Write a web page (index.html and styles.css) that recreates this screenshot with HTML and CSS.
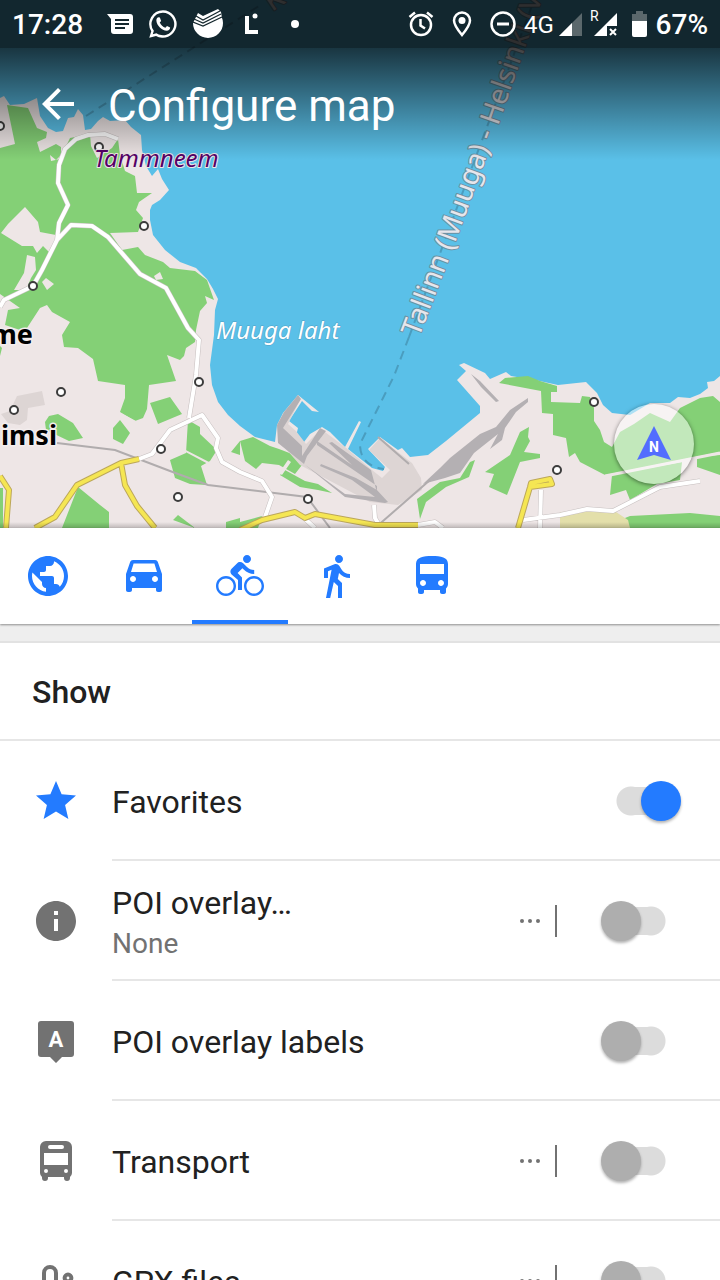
FILE: index.html
```html
<!DOCTYPE html>
<html lang="en">
<head>
<meta charset="utf-8">
<meta name="viewport" content="width=device-width, initial-scale=1">
<title>Configure map</title>
<link rel="stylesheet" href="styles.css">
</head>
<body>
<div class="app">
  <header class="hero">
    <svg class="map" viewBox="0 0 720 528" preserveAspectRatio="xMidYMid slice" role="img" aria-label="Map">
      <rect class="sea" width="720" height="528"/>
      <path class="land" d="M0 98L4 96 10 105 24 104 37 98 40 116 48 128 56 132 63 131 68 118 74 117 78 109 83 115 85 130 91 129 98 121 103 117 110 121 125 120 131 127 141 135 142 150 146 166 152 176 158 169 162 179 169 190 160 200 152 205 150 210 150 220 153 235 165 250 180 262 196 268 207 279 213 289 218 299 215 310 214 335 210 365 212 385 218 402 228 415 240 426 255 437 275 442 277 425 283 413 298 395 319 412 312 411 302 401 289 421 298 428 296 436 304 442 310 434 322 427 330 432 345 447 359 421 361 422 348 449 372 468 383 471 385 467 368 449 380 437 398 450 402 448 410 457 428 455 446 441 480 413 480 406 457 380 466 371 459 365 464 363 485 373 490 379 506 372 511 376 535 380 558 385 586 382 597 393 603 405 612 413 630 415 650 403 670 403 678 397 690 398 700 394 708 388 707 382 714 381 720 376V528H0Z"/>
      <g class="wood">
        <path d="M7 105L28 108 37 128 47 132 46 138 37 142 40 152 50 147 56 144 61 147 61 155 56 160 50 155 51 161 60 159 70 138 90 134 91 146 97 158 112 148 118 139 120 155 125 171 135 176 137 193 152 193 139 202 136 210 143 218 138 232 110 233 122 250 138 247 145 255 163 262 170 268 195 271 207 280 214 300 205 296 207 303 200 311 196 330 195 342 186 348 184 356 180 360 167 355 176 381 149 385 147 409 143 418 135 421 120 412 125 398 125 385 98 381 93 359 78 348 64 347 62 335 70 322 52 312 47 305 40 308 27 328 20 330 5 325 8 310 20 308 0 294V148L15 144Z"/>
        <path d="M45 422L49 416 58 414 73 423 83 438 69 441 46 430ZM150 403L170 397 182 414 158 424ZM113 428L120 420 130 433 123 444 113 439ZM188 420L200 427 200 434 217 450 210 461 201 466 207 485 190 484 175 478 170 460 186 453ZM62 528L78 487 100 505 109 512 109 528ZM173 520L178 515 195 528ZM226 528V522L240 518V528ZM0 346L2 348 0 356ZM0 488H3V528H0ZM231 452L240 441 240 455ZM240 441L253 437 270 446 279 449 292 454 302 465 295 474 279 465 262 463 256 469 245 461ZM285 470L305 481 318 484 332 493 318 490 300 487 280 475ZM240 522L262 516 258 528H240ZM417 499L440 482 460 478 470 462 475 460 469 477 446 487 426 502 420 519Z"/>
        <path d="M499 383L505 378 528 376 540 381 557 386 557 392 551 392 551 402 580 403 582 396 590 397 594 408 594 421 600 430 604 442 612 447 620 432 634 424 650 413 670 422 680 408 700 398 713 396 720 402V452L605 475 580 462 575 453 569 457 566 438 553 435 553 414 542 413 541 391ZM612 475L682 462 680 480 657 484 630 500 626 490 610 495ZM485 472L510 455 520 432 529 427 528 437 530 441 524 452 540 454 540 458 520 462 507 495 489 487 494 474ZM620 520L630 516 690 513 720 516 V528H628ZM697 457L720 455V475L697 467Z"/>
      </g>
      <g class="land">
        <path d="M1 233L8 224 25 207 38 222 40 232 56 235 57 241 50 253 43 246 37 253 33 246 22 246ZM27 255L35 257 36 270 31 278 26 290 14 290 24 273ZM46 278L54 284 47 290 42 282ZM154 276L160 272 163 279 156 280ZM119 412L136 421 135 423 119 415ZM178 446L211 463 210 465 178 448ZM288 460L291 462 282 475 279 473Z"/>
      </g>
      <path class="field" d="M560 512L613 510 628 520 630 528H560Z"/>
      <g class="yard">
        <path d="M17 396L42 391 45 405 28 408 27 420 20 425 8 423 1 414 10 411ZM289 408L300 400 288 424 296 431 306 444 321 429 345 447 372 470 382 478 390 470 369 450 380 438 412 463 421 478 422 490 398 505 370 502 300 465 278 440Z"/>
      </g>
      <g class="dock">
        <path d="M298 395L301 399 283 428 302 446 302 456 320 428 326 431 307 456 304 464 345 494 375 497 352 480 320 466 321 464 356 478 377 490 377 486 317 445 317 441 352 465 329 443 332 442 371 470 376 489 388 502 385 503 345 497 278 443 277 425 284 412ZM425 482L440 468 450 458 480 434 496 427 510 410 528 398 528 402 516 412 505 428 502 440 490 449 498 434 474 453 460 473 445 478 423 484ZM471 374L480 381 499 401 496 402 481 387Z"/>
        <path class="rail" d="M378 437L409 464M57 443L115 450 170 471 208 485 307 497 330 528M375 528L430 480"/>
      </g>
      <path class="road-edge" d="M118 139L105 134 88 135 76 139 65 149 59 165 58 183 68 205 59 223 57 240M0 307L4 300 33 286 42 270 57 240 71 225 92 226 108 237 140 274 166 288 188 328 199 340 196 375 189 418M139 459L152 454 170 430 202 415 218 438 216 448 222 462 240 472 262 481 272 497 264 520M374 505L375 518 381 528M304 518L315 528M418 525L435 522 443 528M523 520L560 515 587 509 613 511 660 487 700 481M541 490L540 528"/>
      <path class="road" d="M118 139L105 134 88 135 76 139 65 149 59 165 58 183 68 205 59 223 57 240M0 307L4 300 33 286 42 270 57 240 71 225 92 226 108 237 140 274 166 288 188 328 199 340 196 375 189 418M139 459L152 454 170 430 202 415 218 438 216 448 222 462 240 472 262 481 272 497 264 520M374 505L375 518 381 528M304 518L315 528M418 525L435 522 443 528M523 520L560 515 587 509 613 511 660 487 700 481M541 490L540 528"/>
      <path class="lane" d="M605 476L720 453"/>
      <path class="highway-edge" d="M139 459L121 463 77 485 55 517 35 528M121 463L125 485 137 506 155 528M0 476L9 490 6 528M240 530L262 520 295 512 305 518 315 514 375 525 418 525M518 528L530 487 531 483 550 479 552 484 530 487"/>
      <path class="highway" d="M139 459L121 463 77 485 55 517 35 528M121 463L125 485 137 506 155 528M0 476L9 490 6 528M240 530L262 520 295 512 305 518 315 514 375 525 418 525M518 528L530 487 531 483 550 479 552 484 530 487"/>
      <path class="ferry" d="M409 337L394 376 360 444Q360 466 384 469M86 116L262 4M409 337L540 -16"/>
      <g class="stop">
        <circle cx="0" cy="126" r="4"/><circle cx="99" cy="147" r="4"/><circle cx="144" cy="226" r="4"/><circle cx="33" cy="286" r="4"/><circle cx="61" cy="392" r="4"/><circle cx="14" cy="410" r="4"/><circle cx="199" cy="382" r="4"/><circle cx="161" cy="449" r="4"/><circle cx="178" cy="497" r="4"/><circle cx="308" cy="499" r="4"/><circle cx="594" cy="402" r="4"/><circle cx="557" cy="470" r="4"/>
      </g>
      <path id="ferry-line" d="M419 338L457 238 499 123 557 -44" fill="none"/>
      <text class="ferry-name"><textPath href="#ferry-line">Tallinn (Muuga) - Helsinki (V</textPath></text>
      <text class="ferry-name" transform="translate(272 12) rotate(-34)">K</text>
      <text class="place" x="94" y="167">Tammneem</text>
      <text class="bay" x="216" y="339">Muuga laht</text>
      <text class="town" x="33" y="344">me</text>
      <text class="town" x="57" y="445">imsi</text>
    </svg>

    <div class="overlay">
      <div class="status">
        <span class="clock">17:28</span>
        <div class="notices">
          <svg width="26" height="24" viewBox="0 0 26 24"><path fill="#fff" d="M0 2H23Q26 2 26 5V19Q26 22 23 22H7Q4 22 4 19V7Z"/><path stroke="#14272d" stroke-width="2" d="M8 8H22M8 12H22M8 16H18"/></svg>
          <svg width="30" height="30" viewBox="0 0 24 24" fill="#fff"><path d="M12 1A11 11 0 0 0 2.600 17.700L1 23L6.400 21.500A11 11 0 1 0 12 1ZM12 3A9 9 0 1 1 6.700 19.300L3.800 20.200 4.700 17.400A9 9 0 0 1 12 3Z"/><path d="M8.500 6.500C7.500 6.500 6.500 7.800 6.700 9.300 7.200 13.500 11 17 15 17.300 16.500 17.300 17.800 16.300 17.700 14.800L15.200 13.500 13.900 15C12 14.300 10.300 12.700 9.400 10.800L10.500 9.500 9.500 6.700Z"/></svg>
          <svg width="30" height="30" viewBox="0 0 30 30"><path fill="#fff" d="M1 12L5 4 10 7 25 0 28 3 29 9Q30 11 30 14A15 15 0 0 1 0 14Z"/><path fill="none" stroke="#14272d" stroke-width="1.200" d="M3 7L10 11 27 2M1 10L10 14 28 5M0 13L10 17 29 8"/></svg>
          <svg width="16" height="24" viewBox="0 0 16 24"><path fill="none" stroke="#fff" stroke-width="4" d="M4 4V20H15"/><circle cx="12" cy="4" r="2.500" fill="#fff"/></svg>
          <svg width="10" height="10" viewBox="0 0 10 10"><circle cx="5" cy="5" r="4" fill="#fff"/></svg>
        </div>
        <div class="system">
          <svg width="26" height="28" viewBox="0 0 26 28" fill="none" stroke="#fff" stroke-width="2.500"><circle cx="13" cy="15" r="10"/><path d="M1.500 7L7 2.500M24.500 7L19 2.500M12.500 9V15.500L17 18.500"/></svg>
          <svg class="pin" width="20" height="26" viewBox="0 0 20 26"><path fill="none" stroke="#fff" stroke-width="2.500" d="M10 24C5 18 2 13.500 2 9.500A8 8 0 0 1 18 9.500C18 13.500 15 18 10 24Z"/><circle cx="10" cy="9.500" r="3.500" fill="#fff"/></svg>
          <svg class="dnd" width="26" height="26" viewBox="0 0 26 26" fill="none" stroke="#fff"><circle cx="13" cy="13" r="11.500" stroke-width="2.500"/><path stroke-width="3" d="M7 13H19"/></svg>
          <span class="net">4G</span>
          <svg width="23" height="23" viewBox="0 0 23 23"><path fill="#5b686c" d="M23 0V23H0Z"/><path fill="#fff" d="M13 10V23H0Z"/></svg>
          <span class="roam">R</span>
          <svg class="sim" width="23" height="23" viewBox="0 0 23 23"><path fill="#fff" d="M23 0V13H13V23H0Z"/><path stroke="#fff" stroke-width="2" d="M16 16L22 22M22 16L16 22"/></svg>
          <svg width="15" height="26" viewBox="0 0 15 26"><path fill="#5b686c" d="M4 0H11V3H15V12H0V3H4Z"/><path fill="#fff" d="M0 10H15V24Q15 26 13 26H2Q0 26 0 24Z"/></svg>
          <span class="clock">67%</span>
        </div>
      </div>
      <div class="toolbar">
        <button class="back" type="button" aria-label="Back"><svg viewBox="0 0 24 24"><path d="M20 11H7.830l5.590-5.590L12 4l-8 8 8 8 1.410-1.410L7.830 13H20v-2z"/></svg></button>
        <h1>Configure map</h1>
      </div>
      <button class="compass" type="button" aria-label="Compass">
        <svg viewBox="0 0 80 80"><path fill="#536dfe" d="M40 22L57 56 40 51 23 56Z"/><text x="40" y="48">N</text></svg>
      </button>
    </div>
  </header>

  <nav class="tabs" aria-label="Profiles">
    <button type="button" aria-label="Browse map"><svg viewBox="0 0 24 24"><path d="M12 2C6.480 2 2 6.480 2 12s4.480 10 10 10 10-4.480 10-10S17.520 2 12 2zm-1 17.930c-3.950-.49-7-3.850-7-7.930 0-.62.08-1.210.21-1.790L9 15v1c0 1.100.9 2 2 2v1.930zm6.900-2.540c-.26-.81-1-1.390-1.900-1.390h-1v-3c0-.55-.45-1-1-1H8v-2h2c.55 0 1-.45 1-1V7h2c1.100 0 2-.9 2-2v-.41c2.930 1.190 5 4.060 5 7.410 0 2.080-.8 3.970-2.100 5.390z"/></svg></button>
    <button type="button" aria-label="Car"><svg viewBox="0 0 24 24"><path d="M18.920 5.010C18.720 4.420 18.160 4 17.500 4h-11c-.66 0-1.210.42-1.420 1.010L3 11v8c0 .55.45 1 1 1h1c.55 0 1-.45 1-1v-1h12v1c0 .55.45 1 1 1h1c.55 0 1-.45 1-1v-8l-2.080-5.990zM6.500 15c-.83 0-1.500-.67-1.500-1.500S5.670 12 6.500 12s1.500.67 1.500 1.500S7.330 15 6.500 15zm11 0c-.83 0-1.500-.67-1.500-1.500s.67-1.500 1.500-1.500 1.500.67 1.500 1.500-.67 1.500-1.500 1.500zM5.500 10l1.300-4.200h10.400L18.500 10z"/></svg></button>
    <button type="button" class="active" aria-label="Bicycle" aria-pressed="true"><svg viewBox="0 0 24 24"><path d="M15.500 5.500c1.100 0 2-.9 2-2s-.9-2-2-2-2 .9-2 2 .9 2 2 2zM5 12c-2.800 0-5 2.200-5 5s2.200 5 5 5 5-2.200 5-5-2.200-5-5-5zm0 8.800c-2.100 0-3.800-1.700-3.800-3.800s1.700-3.800 3.800-3.800 3.800 1.700 3.800 3.800-1.700 3.800-3.800 3.800zm5.800-10.300l2.400-2.400.8.8c1.300 1.300 3 2.100 5.100 2.100V9c-1.500 0-2.700-.6-3.600-1.500l-1.900-1.900c-.5-.4-1-.6-1.600-.6s-1.100.2-1.400.6L7.800 8.400c-.4.4-.6.900-.6 1.400 0 .6.200 1.100.6 1.400L11 14v5h2v-6.200l-2.200-2.300zM19 12c-2.800 0-5 2.200-5 5s2.200 5 5 5 5-2.200 5-5-2.200-5-5-5zm0 8.800c-2.100 0-3.800-1.700-3.800-3.800s1.700-3.800 3.800-3.800 3.800 1.700 3.800 3.800-1.700 3.800-3.800 3.800z"/></svg></button>
    <button type="button" aria-label="Pedestrian"><svg viewBox="0 0 24 24"><path d="M13.500 5.500c1.100 0 2-.9 2-2s-.9-2-2-2-2 .9-2 2 .9 2 2 2zM9.800 8.900L7 23h2.100l1.800-8 2.100 2v6h2v-7.500l-2.100-2 .6-3C14.800 12 16.800 13 19 13v-2c-1.900 0-3.500-1-4.300-2.400l-1-1.600c-.4-.6-1-1-1.700-1-.3 0-.5.1-.8.1L6 8.300V13h2V9.600l1.800-.7"/></svg></button>
    <button type="button" aria-label="Bus"><svg viewBox="0 0 24 24"><path d="M4 16c0 .88.39 1.670 1 2.220V20c0 .55.45 1 1 1h1c.55 0 1-.45 1-1v-1h8v1c0 .55.45 1 1 1h1c.55 0 1-.45 1-1v-1.780c.61-.55 1-1.340 1-2.220V6c0-3.500-3.580-4-8-4s-8 .5-8 4v10zm3.500 1c-.83 0-1.500-.67-1.500-1.500S6.670 14 7.500 14s1.500.67 1.500 1.500S8.330 17 7.500 17zm9 0c-.83 0-1.500-.67-1.500-1.500s.67-1.500 1.500-1.500 1.500.67 1.500 1.500-.67 1.500-1.500 1.500zm1.500-6H6V6h12v5z"/></svg></button>
  </nav>

  <main class="content">
    <h2>Show</h2>
    <ul class="list">
      <li class="row">
        <svg class="icon on" viewBox="0 0 24 24"><path d="M12 17.270L18.180 21l-1.640-7.030L22 9.240l-7.190-.61L12 2 9.190 8.630 2 9.240l5.460 4.730L5.820 21z"/></svg>
        <label class="label" for="favorites">Favorites</label>
        <input class="switch" id="favorites" type="checkbox" role="switch" checked>
      </li>
      <li class="row">
        <svg class="icon" viewBox="0 0 24 24"><path d="M12 2C6.480 2 2 6.480 2 12s4.480 10 10 10 10-4.480 10-10S17.520 2 12 2zm1 15h-2v-6h2v6zm0-8h-2V7h2v2z"/></svg>
        <label class="label" for="poi">POI overlay…<small>None</small></label>
        <button class="more" type="button" aria-label="POI overlay options"><svg viewBox="0 0 24 8"><circle cx="4" cy="4" r="2"/><circle cx="12" cy="4" r="2"/><circle cx="20" cy="4" r="2"/></svg></button>
        <input class="switch" id="poi" type="checkbox" role="switch">
      </li>
      <li class="row">
        <svg class="icon" viewBox="0 0 24 24"><path d="M4.500 2h15Q21 2 21 3.500v15Q21 20 19.500 20H15L12 23 9 20H4.500Q3 20 3 18.500v-15Q3 2 4.500 2z"/><text x="12" y="15">A</text></svg>
        <label class="label" for="poi-labels">POI overlay labels</label>
        <input class="switch" id="poi-labels" type="checkbox" role="switch">
      </li>
      <li class="row">
        <svg class="icon" viewBox="0 0 24 24"><path fill-rule="evenodd" d="M7 2h10a3 3 0 0 1 3 3v13q0 1-1 2v.5a1.500 1.500 0 0 1-3 0V20H8v.5a1.500 1.500 0 0 1-3 0V20q-1-1-1-2V5a3 3 0 0 1 3-3zM9 4a1 1 0 0 0 0 2h6a1 1 0 0 0 0-2zM6 8v6h12V8zM7 16a1 1 0 1 0 0 2 1 1 0 0 0 0-2zM17 16a1 1 0 1 0 0 2 1 1 0 0 0 0-2z"/></svg>
        <label class="label" for="transport">Transport</label>
        <button class="more" type="button" aria-label="Transport options"><svg viewBox="0 0 24 8"><circle cx="4" cy="4" r="2"/><circle cx="12" cy="4" r="2"/><circle cx="20" cy="4" r="2"/></svg></button>
        <input class="switch" id="transport" type="checkbox" role="switch">
      </li>
      <li class="row">
        <svg class="icon line" viewBox="0 0 24 24"><path d="M6 18V8a3 3 0 0 1 6 0V17a3 3 0 0 0 6 0V12"/><circle cx="18" cy="10.500" r="1.700"/><circle cx="6" cy="20" r="1.700"/></svg>
        <label class="label" for="gpx">GPX files</label>
        <button class="more" type="button" aria-label="GPX files options"><svg viewBox="0 0 24 8"><circle cx="4" cy="4" r="2"/><circle cx="12" cy="4" r="2"/><circle cx="20" cy="4" r="2"/></svg></button>
        <input class="switch" id="gpx" type="checkbox" role="switch">
      </li>
    </ul>
  </main>
</div>
</body>
</html>
```
FILE: styles.css
```css
* { box-sizing: border-box; }

body {
  margin: 0;
  background: #fff;
  color: #212121;
  font-family: Roboto, "Noto Sans", sans-serif;
}

button {
  margin: 0;
  padding: 0;
  border: 0;
  background: none;
  font: inherit;
  cursor: pointer;
}

svg { display: block; flex: none; }

.app {
  display: flex;
  flex-direction: column;
  height: 100vh;
  overflow: hidden;
}

/* Map header */
.hero {
  display: grid;
  flex: none;
  aspect-ratio: 720 / 528;
  max-height: 60vh;
  overflow: hidden;
}

.map, .overlay {
  grid-area: 1 / 1;
  width: 100%;
  height: 100%;
  min-height: 0;
}

.sea { fill: #5ac0e8; }
.land { fill: #eee6e6; }
.wood { fill: #84d076; }
.field { fill: #e3dfaa; }
.yard { fill: #ddd5d4; }
.dock { fill: #b4b0b3; }
.rail { fill: none; stroke: #b0acad; stroke-width: 2; }
.road, .road-edge, .lane, .highway, .highway-edge {
  fill: none;
  stroke-linejoin: round;
}
.road-edge { stroke: #c6bfbf; stroke-width: 5; }
.road { stroke: #fff; stroke-width: 4; }
.lane { stroke: #eee6e6; stroke-width: 3; }
.highway-edge { stroke: #bca75a; stroke-width: 6; }
.highway { stroke: #f5e653; stroke-width: 4; }
.ferry { fill: none; stroke: #4a9dbf; stroke-width: 2; stroke-dasharray: 9 6; }
.stop { fill: #fff; stroke: #3c3c3c; stroke-width: 2; }

.map text { font-family: "Noto Sans", "Open Sans", sans-serif; paint-order: stroke; stroke-linejoin: round; }
.map .ferry-name { font-size: 28px; fill: #e6e6ec; stroke: #6d91a3; stroke-width: 2px; }
.map .place { font-size: 24px; font-style: italic; fill: #550066; stroke: #eee6e6; stroke-width: 2px; }
.map .bay { font-size: 24px; font-style: italic; fill: #fff; stroke: #4f9fc4; stroke-width: 1px; }
.map .town { font-size: 27px; font-weight: 700; text-anchor: end; fill: #000; stroke: #f4eeee; stroke-width: 3px; }

.overlay {
  display: flex;
  flex-direction: column;
  background:
    linear-gradient(to top, rgba(0, 0, 0, .2), transparent 6px),
    linear-gradient(transparent 48px, rgba(0, 0, 0, .72) 48px, transparent 160px);
}

.status {
  display: flex;
  align-items: center;
  justify-content: space-between;
  height: 48px;
  padding: 0 12px;
  background: rgba(0, 0, 0, .8);
  color: #fff;
}

.clock { padding-top: 2px; font-size: 28px; font-weight: 500; line-height: 46px; }
.notices { display: flex; align-items: center; gap: 15px; margin: 0 auto 0 24px; }
.notices svg:nth-child(4) { margin-left: 5px; }
.notices svg:last-child { margin-left: 16px; }
.system { display: flex; align-items: center; }
.pin { margin-left: 18px; }
.dnd { margin: 0 8px 0 18px; }
.net { padding-top: 2px; margin-right: 5px; font-size: 24px; line-height: 46px; }
.roam { align-self: flex-start; margin: 8px 0 0 8px; font-size: 14px; line-height: 16px; }
.sim { margin: 0 15px 0 -5px; }
.system .clock { margin-left: 9px; }

.toolbar {
  display: flex;
  align-items: center;
  gap: 26px;
  height: 112px;
  padding-left: 34px;
}

.back, .back svg { width: 48px; height: 48px; }
.back svg { fill: #fff; }

h1 {
  margin: 0;
  padding-top: 4px;
  color: #fff;
  font-size: 44px;
  font-weight: 400;
  line-height: 56px;
}

.compass {
  width: 80px;
  height: 80px;
  margin: auto 26px 44px auto;
  border-radius: 50%;
  background: rgba(255, 255, 255, .5);
  box-shadow: 0 1px 4px rgba(0, 0, 0, .5);
}

.compass text { fill: #fff; font-size: 14px; font-weight: 700; text-anchor: middle; }

/* Profile tabs */
.tabs {
  display: flex;
  flex: none;
  z-index: 1;
  height: 96px;
  background: #fff;
  box-shadow: 0 1px 2px rgba(0, 0, 0, .4);
}

.tabs button {
  display: grid;
  place-items: center;
  width: 96px;
}

.tabs svg { width: 48px; height: 48px; fill: #237bff; }
.tabs .active { box-shadow: inset 0 -4px #237bff; }

/* Settings list */
.content {
  flex: 1;
  min-height: 0;
  padding-top: 17px;
  overflow-y: auto;
  scrollbar-width: none;
  background: #eee;
}

h2 {
  margin: 0;
  padding: 2px 32px 0;
  border-top: 2px solid #e2e2e2;
  border-bottom: 2px solid #e6e6e6;
  background: #fff;
  font-size: 32px;
  font-weight: 500;
  line-height: 94px;
}

.list { margin: 0; padding: 0; list-style: none; }

.row {
  display: flex;
  align-items: center;
  min-height: 120px;
  padding: 0 39px 0 32px;
  background: linear-gradient(#e6e6e6, #e6e6e6) 112px 100% / 100% 2px no-repeat #fff;
}

.icon { width: 48px; height: 48px; fill: #727272; }
.icon.on { fill: #237bff; }
.icon.line { fill: none; stroke: #727272; stroke-width: 2; }
.icon text { fill: #fff; font-size: 11px; font-weight: 700; text-anchor: middle; }

.label { flex: 1; margin-left: 32px; padding-top: 2px; font-size: 32px; line-height: 44px; }
.label small { display: block; color: #727272; font-size: 28px; line-height: 38px; }

.more {
  height: 32px;
  margin-right: 44px;
  padding-right: 13px;
  border-right: 2px solid #727272;
}

.more svg { width: 24px; height: 8px; fill: #727272; }

.switch {
  appearance: none;
  flex: none;
  width: 80px;
  height: 40px;
  margin: 0;
  background:
    radial-gradient(circle at 30px 20px, #dcdcdc 14px, transparent 15px),
    radial-gradient(circle at 50px 20px, #dcdcdc 14px, transparent 15px),
    linear-gradient(#dcdcdc, #dcdcdc) center / 20px 28px no-repeat;
}

.switch::before {
  content: "";
  display: block;
  width: 40px;
  height: 40px;
  border-radius: 50%;
  background: #aeaeae;
  box-shadow: 0 2px 3px rgba(0, 0, 0, .3);
}

.switch:checked::before { margin-left: 40px; background: #237bff; }
```
